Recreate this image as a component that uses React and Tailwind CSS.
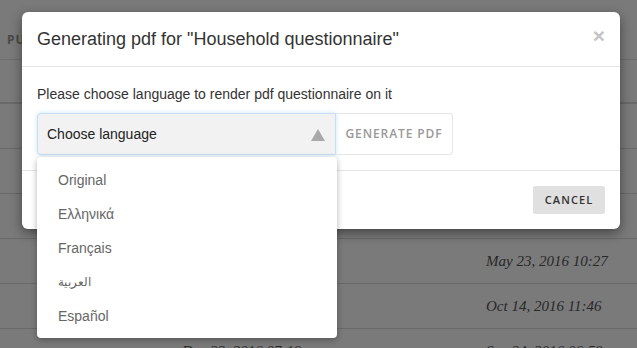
import { useState } from 'react';

const rows = [
  { a: '', b: 'Jan 12, 2016 09:14', c: 'Feb 02, 2016 14:03' },
  { a: '', b: 'Mar 08, 2016 11:20', c: 'Mar 30, 2016 16:41' },
  { a: '', b: 'Apr 01, 2016 08:55', c: 'Apr 19, 2016 12:08' },
  { a: '', b: 'Apr 22, 2016 10:02', c: 'May 02, 2016 09:33' },
  { a: '', b: 'May 10, 2016 13:45', c: 'May 23, 2016 10:27' },
  { a: '', b: 'Sep 30, 2016 15:12', c: 'Oct 14, 2016 11:46' },
  { a: '', b: 'Dec 22, 2016 07:19', c: 'Sep 24, 2016 06:59' },
];

const languages = [
  { label: 'Original' },
  { label: 'Ελληνικά' },
  { label: 'Français' },
  { label: 'العربية', small: true },
  { label: 'Español' },
];

export default function App() {
  const [open] = useState(true);

  return (
    <div className="relative w-[637px] h-[348px] overflow-hidden bg-white font-['Liberation_Sans',Arial,sans-serif]">
      {/* page underneath */}
      <div className="w-full">
        <div className="h-[60px] border-b border-[#e8e8e8] flex items-end pb-[10px] pl-[7px]">
          <span className="text-[12px] font-bold tracking-[1px] text-[#999] font-['Open_Sans',sans-serif]">PUBLISHED</span>
        </div>
        {rows.map((r, i) => (
          <div
            key={i}
            className={`${i === 0 ? 'h-[44px] border-b-2' : 'h-[45px] border-b'} border-[#dcdcdc] flex items-center font-['Liberation_Serif',Georgia,serif] italic text-[15px] text-[#555]`}
          >
            <span className="w-[182px]" />
            <span className="w-[304px]">{r.b}</span>
            <span>{r.c}</span>
          </div>
        ))}
      </div>

      {/* overlay + modal */}
      <div className="absolute inset-0 bg-[rgba(0,0,0,0.52)]">
        <div className="absolute left-[22px] top-[12px] w-[598px] bg-white rounded-[6px] shadow-[0_4px_12px_rgba(0,0,0,0.45)]">
          <div className="h-[55px] border-b border-[#e5e5e5] flex items-center justify-between pl-[15px] pr-[15px]">
            <h3 className="text-[18px] text-[#333] leading-none pb-[1px]">Generating pdf for "Household questionnaire"</h3>
            <button className="text-[21px] font-bold leading-none text-[#c4c4c4] mb-[8px]">×</button>
          </div>
          <div className="px-[15px] pt-[17px] pb-[15px] border-b border-[#e5e5e5]">
            <p className="text-[14px] text-[#333] leading-[20px]">Please choose language to render pdf questionnaire on it</p>
            <div className="relative mt-[9px] flex h-[42px]">
              <div className="w-[299px] h-full bg-[#f2f2f2] border border-[#c9def2] rounded-l-[4px] shadow-[0_0_4px_rgba(102,175,233,0.35)] flex items-center justify-between pl-[9px] pr-[10px]">
                <span className="text-[14px] text-[#222]">Choose language</span>
                <svg width="14" height="12" viewBox="0 0 14 12" className="mt-[1px]">
                  <path d="M7 0 L14 12 L0 12 Z" fill="#a9a9a9" />
                </svg>
              </div>
              <button className="w-[117px] h-full border border-l-0 border-[#e6e6e6] rounded-r-[4px] text-[12px] font-semibold tracking-[0.9px] text-[#999] font-['Open_Sans',sans-serif]">
                GENERATE PDF
              </button>
              {open && (
                <ul className="absolute left-0 top-[44px] w-[300px] bg-white rounded-[4px] shadow-[0_2px_6px_rgba(0,0,0,0.3)] pt-[6px] pb-[5px] z-10">
                  {languages.map((l) => (
                    <li
                      key={l.label}
                      className={`h-[34px] flex items-center pl-[21px] text-[#666] ${l.small ? 'text-[12px]' : 'text-[14px]'}`}
                    >
                      {l.label}
                    </li>
                  ))}
                </ul>
              )}
            </div>
          </div>
          <div className="h-[58px] flex items-center justify-end pr-[15px]">
            <button className="w-[72px] h-[28px] bg-[#e0e0e0] rounded-[3px] text-[11px] font-semibold tracking-[1.1px] text-[#333] font-['Open_Sans',sans-serif]">
              CANCEL
            </button>
          </div>
        </div>
      </div>
    </div>
  );
}
